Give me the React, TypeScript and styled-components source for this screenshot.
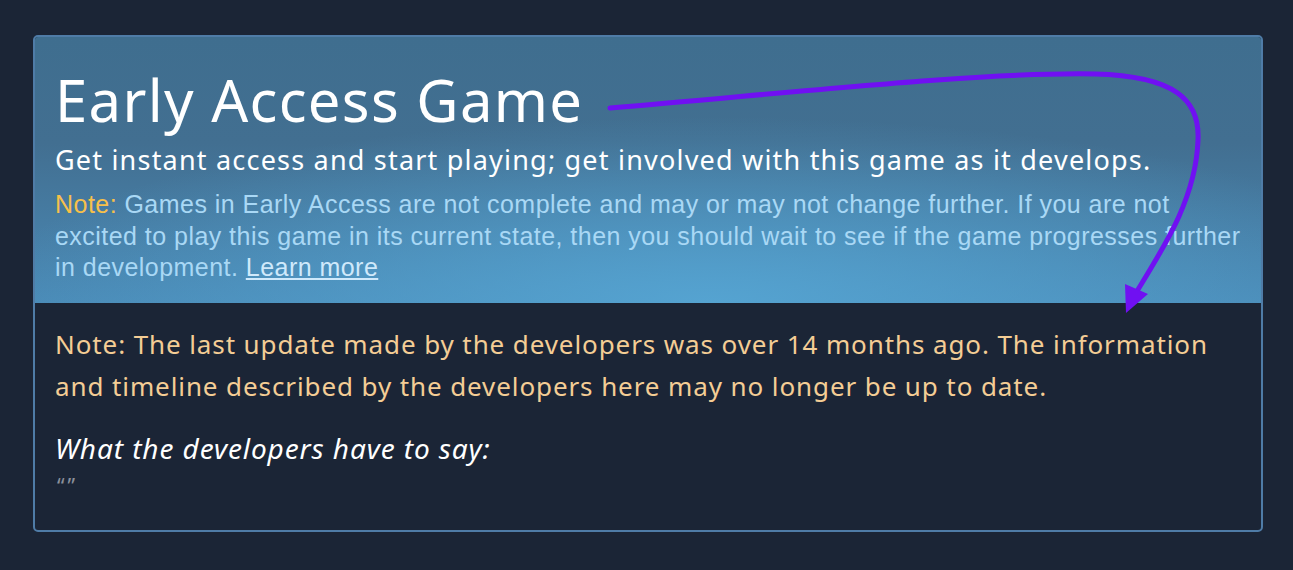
import React from 'react';
import styled, { createGlobalStyle } from 'styled-components';

const GlobalStyle = createGlobalStyle`
  html, body {
    margin: 0;
    padding: 0;
    background: #1b2536;
  }
`;

const Page = styled.div`
  width: 1293px;
  height: 570px;
  padding: 35px 30px 0 33px;
  box-sizing: border-box;
  position: relative;
`;

const Card = styled.div`
  border: 2px solid #4f7ca7;
  border-radius: 5px;
  overflow: hidden;
  background: #1b2536;
  height: 497px;
  box-sizing: border-box;
`;

const Header = styled.div`
  padding: 30px 16px 20px 20px;
  height: 266px;
  box-sizing: border-box;
  background:
    radial-gradient(ellipse 60% 70% at 55% 100%, rgba(86, 166, 212, 0.9) 0%, rgba(86, 166, 212, 0) 100%),
    linear-gradient(180deg, #3f6e8f 0%, #426f91 40%, #4a8ab6 100%);
`;

const Title = styled.h1`
  margin: 0;
  font-family: 'Noto Sans', 'Open Sans', sans-serif;
  font-weight: 400;
  font-size: 58px;
  letter-spacing: 1.3px;
  line-height: 66px;
  color: #ffffff;
`;

const Subtitle = styled.div`
  margin-top: 10px;
  font-family: 'Noto Sans', 'Open Sans', sans-serif;
  font-size: 27px;
  letter-spacing: 1.2px;
  line-height: 34px;
  color: #ffffff;
`;

const Notice = styled.div`
  margin-top: 12px;
  font-family: 'Liberation Sans', Arial, sans-serif;
  font-size: 25px;
  letter-spacing: 0.46px;
  line-height: 31.5px;
  color: #a9d8f5;
`;

const NoteLabel = styled.span`
  color: #f7c04a;
`;

const LearnMore = styled.a`
  color: #cfe9fb;
  text-decoration: underline;
  cursor: pointer;
`;

const Body = styled.div`
  padding: 20px 18px 20px 20px;
`;

const StaleNote = styled.div`
  font-family: 'Noto Sans', 'Open Sans', sans-serif;
  font-size: 26px;
  letter-spacing: 0.9px;
  line-height: 42px;
  color: #f4cd95;
`;

const SayHeading = styled.div`
  margin-top: 23px;
  font-family: 'Noto Sans', 'Open Sans', sans-serif;
  font-style: italic;
  font-size: 28px;
  letter-spacing: 0.9px;
  line-height: 36px;
  color: #ffffff;
`;

const Quote = styled.div`
  margin-top: 10px;
  padding-left: 2px;
  font-family: 'Noto Sans', 'Open Sans', sans-serif;
  font-size: 21px;
  letter-spacing: 3px;
  line-height: 20px;
  color: #8a909b;
`;

const Annotation = styled.svg`
  position: absolute;
  left: 0;
  top: 0;
  pointer-events: none;
`;

const Arrow: React.FC = () => (
  <Annotation width={1293} height={570} viewBox="0 0 1293 570">
    <path
      d="M610 108 C 800 92 980 72 1095 74 C 1175 76 1200 100 1198 140 C 1196 200 1162 250 1134 296"
      fill="none"
      stroke="#7010f2"
      strokeWidth={5}
      strokeLinecap="round"
    />
    <polygon points="1126,313 1125,284 1148,294" fill="#7010f2" />
  </Annotation>
);

export default function App() {
  return (
    <>
      <GlobalStyle />
      <Page>
        <Card>
          <Header>
            <Title>Early Access Game</Title>
            <Subtitle>
              Get instant access and start playing; get involved with this game as it develops.
            </Subtitle>
            <Notice>
              <NoteLabel>Note:</NoteLabel> Games in Early Access are not complete and may or may not
              change further. If you are not excited to play this game in its current state, then you
              should wait to see if the game progresses further in development.{' '}
              <LearnMore>Learn more</LearnMore>
            </Notice>
          </Header>
          <Body>
            <StaleNote>
              Note: The last update made by the developers was over 14 months ago. The information
              and timeline described by the developers here may no longer be up to date.
            </StaleNote>
            <SayHeading>What the developers have to say:</SayHeading>
            <Quote>“”</Quote>
          </Body>
        </Card>
        <Arrow />
      </Page>
    </>
  );
}
